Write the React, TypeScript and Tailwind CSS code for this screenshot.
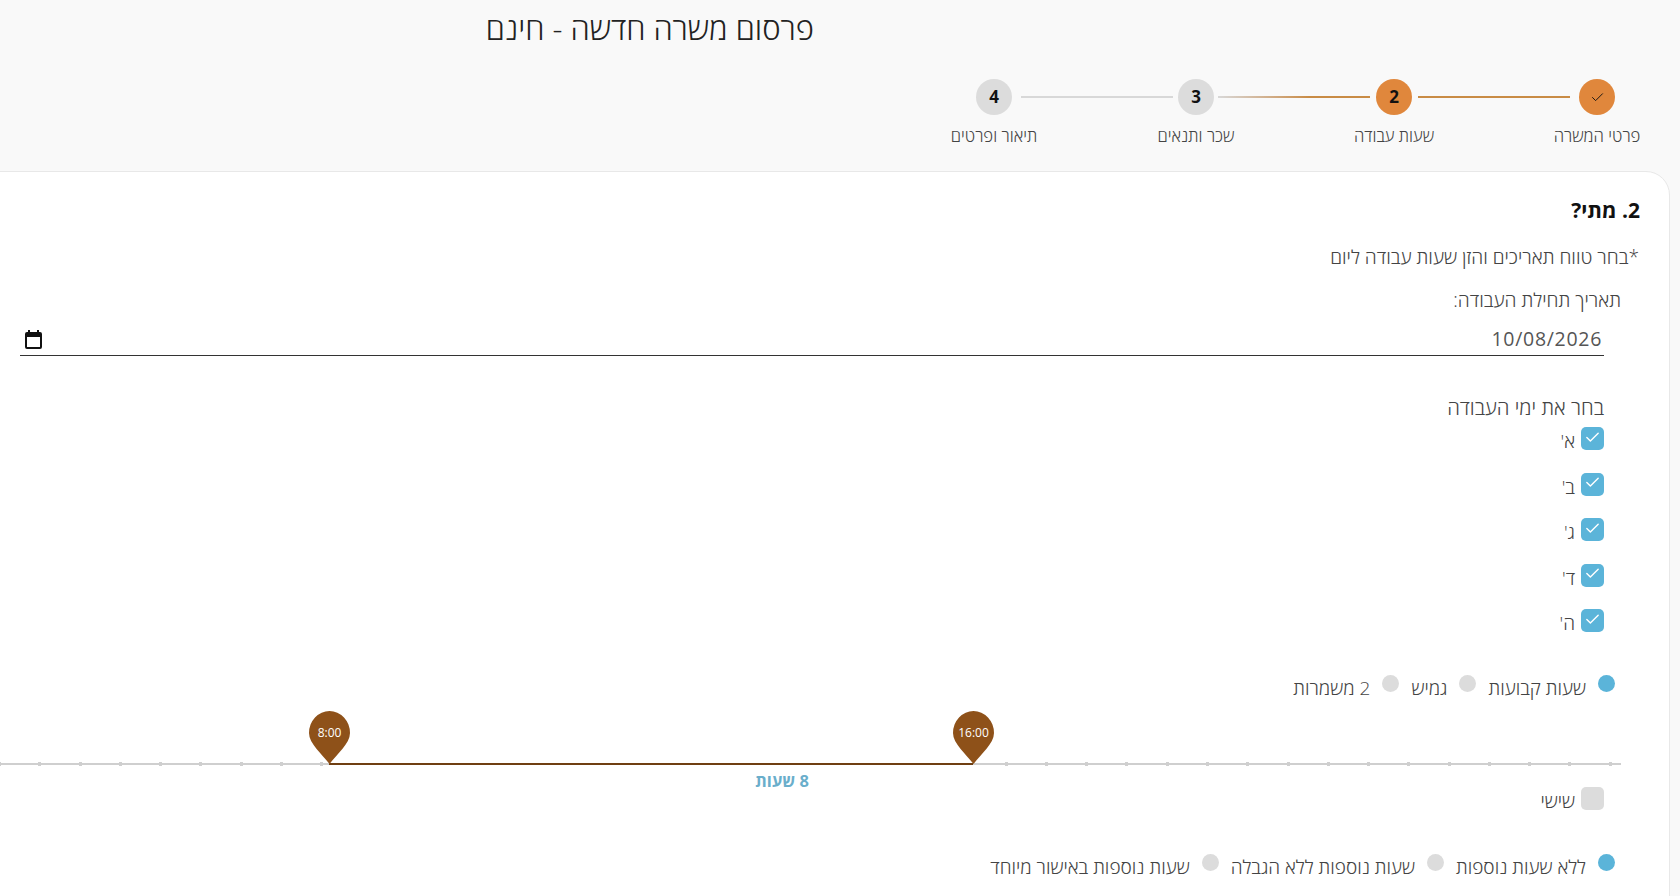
import { Check } from "lucide-react";

const steps = [
  { label: "פרטי המשרה", mark: "check", active: true },
  { label: "שעות עבודה", mark: "2", active: true },
  { label: "שכר ותנאים", mark: "3", active: false },
  { label: "תיאור ופרטים", mark: "4", active: false },
];

const days = ["א'", "ב'", "ג'", "ד'", "ה'"];
const ticks = Array.from({ length: 41 }, (_, i) => i);

function Step({ label, mark, active }: { label: string; mark: string; active: boolean }) {
  return (
    <div className="flex w-9 flex-col items-center">
      <div className={`flex h-9 w-9 shrink-0 items-center justify-center rounded-full text-[17px] font-bold text-[#111] ${active ? "bg-[#e0873c]" : "bg-[#dcdcdc]"}`}>
        {mark === "check" ? <Check size={15} strokeWidth={1.5} /> : mark}
      </div>
      <span className="mt-[9px] whitespace-nowrap text-[16.7px] font-[350] leading-[24px] text-[#444]">{label}</span>
    </div>
  );
}

function Radio({ label, checked, className }: { label: string; checked?: boolean; className?: string }) {
  return (
    <label className={`flex items-start ${className ?? ""}`}>
      <span className={`mt-[1px] h-[17px] w-[17px] shrink-0 rounded-full ${checked ? "bg-[#5bb4d9]" : "bg-[#dcdcdc]"}`} />
      <span className="mr-[12px] mt-[2px] whitespace-nowrap text-[19px] font-[350] leading-[24px] text-[#444]">{label}</span>
    </label>
  );
}

function DayCheck({ label, checked }: { label: string; checked: boolean }) {
  return (
    <label className="flex h-[23px] items-center">
      <span className={`flex h-[23px] w-[23px] shrink-0 items-center justify-center rounded-[5px] ${checked ? "bg-[#5bb4d9]" : "bg-[#dcdcdc]"}`}>
        {checked && <Check size={17} strokeWidth={2} className="mb-[3px] text-white" />}
      </span>
      <span className="mr-[6px] mt-[5px] text-[19px] font-[350] leading-[24px] text-[#444]">{label}</span>
    </label>
  );
}

function Pin({ time, className }: { time: string; className: string }) {
  return (
    <div className={`absolute bottom-[1px] h-[53px] w-[41px] ${className}`}>
      <svg viewBox="0 0 41 52" preserveAspectRatio="none" className="absolute inset-0 h-full w-full">
        <path d="M20.5 52C13 42 0 32 0 21.5A20.5 21.5 0 0 1 41 21.5C41 32 28 42 20.5 52Z" fill="#8e5119" />
      </svg>
      <span className="absolute inset-x-0 top-[14px] text-center text-[12px] leading-[16px] text-white">{time}</span>
    </div>
  );
}

export default function App() {
  return (
    <div dir="rtl" className="h-[896px] w-[1680px] overflow-hidden bg-[#f9f9f9] font-['Open_Sans','Noto_Sans',sans-serif]">
      <h1 className="pr-[866px] pt-[7px] text-[31px] font-[350] leading-[42px] text-[#222]">פרסום משרה חדשה - חינם</h1>

      <div className="mt-[30px] flex items-start pr-[65px]">
        {steps.map((s, i) => (
          <div key={s.label} className="flex items-start">
            <Step label={s.label} mark={s.mark} active={s.active} />
            {i === 0 && <div className="mr-[9px] ml-[6px] mt-[17px] h-[2px] w-[152px] bg-[#c98c45]" />}
            {i === 1 && <div className="mr-[6px] ml-[4px] mt-[17px] h-[2px] w-[152px] bg-gradient-to-l from-[#c98c45] from-40% to-[#d8d8d8]" />}
            {i === 2 && <div className="mr-[5px] ml-[9px] mt-[17px] h-[2px] w-[152px] bg-[#d8d8d8]" />}
          </div>
        ))}
      </div>

      <div className="ml-[-30px] mr-[10px] mt-[23px] h-[760px] rounded-[24px] border border-[#e8e8e8] bg-white pt-[24px]">
        <h2 className="pr-[29px] text-[21px] font-bold leading-[28px] text-[#111]">2. מתי?</h2>
        <p className="mt-[21px] pr-[30px] text-[19.2px] font-[350] leading-[24px] text-[#444]">*בחר טווח תאריכים והזן שעות עבודה ליום</p>

        <p className="mt-[19px] pr-[48px] text-[19.2px] font-[350] leading-[24px] text-[#444]">תאריך תחילת העבודה:</p>
        <div className="ml-[49px] mr-[65px] mt-[15px] flex h-[29px] items-start justify-between border-b border-[#333] pl-[5px] pr-[2px]">
          <span className="text-[19.5px] font-normal leading-[24px] tracking-[0.7px] text-[#555]">10/08/2026</span>
          <svg viewBox="0 0 17 19" className="mt-[3px] h-[19px] w-[17px]">
            <path d="M3 0h2v2h7V0h2v2h1a2 2 0 0 1 2 2v13a2 2 0 0 1-2 2H2a2 2 0 0 1-2-2V4a2 2 0 0 1 2-2h1V0zM2 7v10h13V7H2z" fill="#111" />
          </svg>
        </div>

        <p className="mt-[39px] pr-[65px] text-[20.4px] font-[350] leading-[24px] text-[#444]">בחר את ימי העבודה</p>
        <div className="mt-[8px] flex flex-col gap-[22.5px] pr-[65px]">
          {days.map((d) => (
            <DayCheck key={d} label={d} checked />
          ))}
        </div>

        <div className="mt-[42px] flex pr-[54px]">
          <Radio label="שעות קבועות" checked />
          <Radio label="גמיש" className="mr-[12px]" />
          <Radio label="2 משמרות" className="mr-[12px]" />
        </div>

        <div dir="ltr" className="relative ml-0 mr-[48px] mt-[63px] h-[2px] bg-[#cfcfcf]">
          <div className="flex pl-[27px]">
            {ticks.map((t) => (
              <div key={t} className="w-[40.28px] shrink-0">
                {(t < 9 || t > 24) && <div className="mt-[-1px] h-[4px] w-[3px] bg-[#cfcfcf]" />}
              </div>
            ))}
          </div>
          <div className="absolute left-[358px] top-0 h-[2px] w-[644px] bg-[#6f3f12]" />
          <Pin time="8:00" className="left-[338px]" />
          <Pin time="16:00" className="left-[982px]" />
        </div>
        <p dir="rtl" className="mt-[9px] h-[14px] pr-[860px] text-[16.5px] font-bold leading-[14px] text-[#6aaecb]">8 שעות</p>

        <div className="mt-[-1px] pr-[65px]">
          <DayCheck label="שישי" checked={false} />
        </div>

        <div className="mt-[43px] flex pr-[54px]">
          <Radio label="ללא שעות נוספות" checked />
          <Radio label="שעות נוספות ללא הגבלה" className="mr-[12px]" />
          <Radio label="שעות נוספות באישור מיוחד" className="mr-[12px]" />
        </div>
      </div>
    </div>
  );
}
